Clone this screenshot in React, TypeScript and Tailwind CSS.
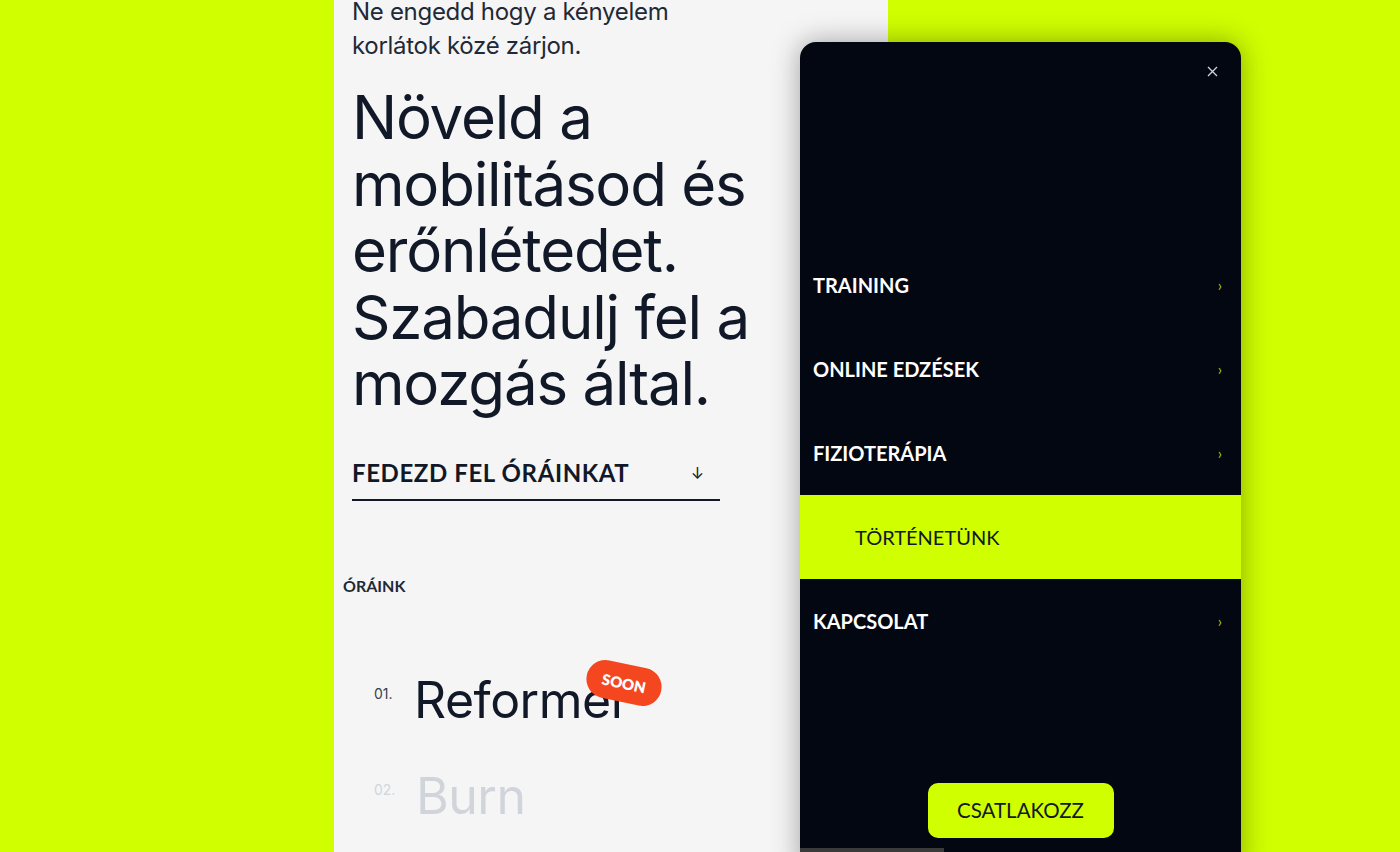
import React from "react";

const items = [
  { label: "TRAINING", active: false },
  { label: "ONLINE EDZÉSEK", active: false },
  { label: "FIZIOTERÁPIA", active: false },
  { label: "TÖRTÉNETÜNK", active: true },
  { label: "KAPCSOLAT", active: false },
];

export default function App() {
  return (
    <div className="relative h-[852px] w-[1400px] overflow-hidden bg-[#d0ff00] font-['Inter',sans-serif]">
      <div className="flex h-full pl-[334px]">
        <main className="h-full w-[554px] bg-[#f5f5f5] text-[#111827]">
          <div className="mt-[-5px] pl-[18px]">
            <p className="text-[24px] leading-[34px] text-[#1f2937] tracking-[-0.3px]">
              Ne engedd hogy a kényelem
              <br />
              korlátok közé zárjon.
            </p>
            <h1 className="mt-[21px] text-[60px] leading-[66.5px] tracking-[-1.2px] text-[#111827]">
              Növeld a
              <br />
              mobilitásod és
              <br />
              erőnlétedet.
              <br />
              Szabadulj fel a
              <br />
              mozgás által.
            </h1>
            <a className="mt-[41px] flex w-[368px] items-center justify-between border-b-2 border-[#111827] pb-[11px] pr-[16px]">
              <span className="text-[24px] font-bold leading-[30px] tracking-[0.6px] font-['Lato',sans-serif]">
                FEDEZD FEL ÓRÁINKAT
              </span>
              <span className="text-[16px] leading-[30px]">↓</span>
            </a>
          </div>
          <div className="mt-[74px] pl-[9px] text-[16px] font-bold leading-[22px] text-[#1f2937] font-['Lato',sans-serif]">
            ÓRÁINK
          </div>
          <ul className="mt-[55px] pl-[40px]">
            <li className="relative flex h-[96px] items-center">
              <span className="mt-[-12px] w-[40px] text-[14px] text-[#374151]">01.</span>
              <span className="text-[50px] leading-[60px] tracking-[-0.5px] text-[#111827]">Reformer</span>
              <span className="absolute left-[212px] top-[12px] flex h-[38px] w-[76px] rotate-[12deg] items-center justify-center rounded-full bg-[#f4471f] text-[15px] font-extrabold text-white font-['Lato',sans-serif]">
                SOON
              </span>
            </li>
            <li className="flex h-[96px] items-center">
              <span className="mt-[-12px] w-[42px] text-[14px] text-[#d1d5db]">02.</span>
              <span className="text-[50px] leading-[60px] tracking-[-0.5px] text-[#d1d5db]">Burn</span>
            </li>
          </ul>
        </main>
      </div>

      <aside className="absolute left-[800px] top-[42px] flex h-[830px] w-[441px] flex-col rounded-t-[16px] bg-[#030712] shadow-[0_0_28px_rgba(0,0,0,0.35)]">
        <div className="flex h-[58px] items-end justify-end pr-[23px]">
          <svg width="11" height="11" viewBox="0 0 11 11" className="mb-[23px]">
            <path d="M1 1L10 10M10 1L1 10" stroke="#d1d5db" strokeWidth="1.3" />
          </svg>
        </div>
        <nav className="mt-[143px] font-['Lato',sans-serif]">
          {items.map((it) =>
            it.active ? (
              <div key={it.label} className="flex h-[84px] items-center bg-[#d0ff00] pl-[55px] text-[20px] leading-none text-[#111827]">
                {it.label}
              </div>
            ) : (
              <div key={it.label} className="flex h-[84px] items-center justify-between pl-[13px] pr-[19px]">
                <span className="text-[20px] font-bold leading-none text-white">{it.label}</span>
                <span className="text-[15px] leading-none text-[#a8d000]">›</span>
              </div>
            )
          )}
        </nav>
        <div className="mt-[120px] flex justify-center">
          <button className="h-[55px] w-[186px] rounded-[10px] bg-[#d0ff00] text-[20.5px] text-[#111827] font-['Lato',sans-serif]">
            CSATLAKOZZ
          </button>
        </div>
        <div className="absolute left-0 top-[806px] h-[4px] w-[144px] bg-[#3a3a3a]" />
      </aside>
    </div>
  );
}
